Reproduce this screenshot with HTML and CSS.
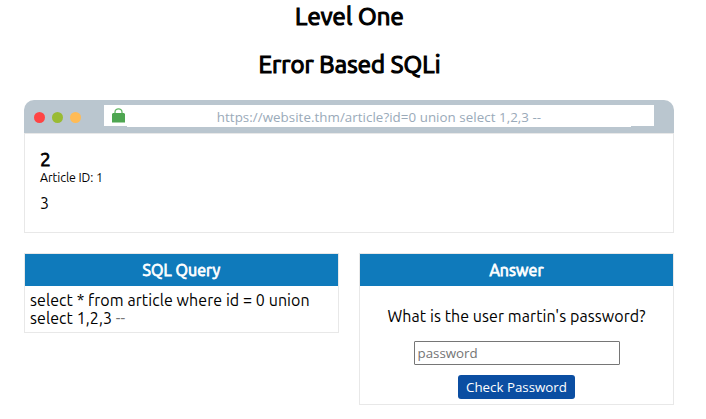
FILE: index.html
```html
<!DOCTYPE html>
<html lang="en">
<head>
<meta charset="utf-8">
<title>Level One</title>
<link rel="stylesheet" href="styles.css">
</head>
<body>
<h1 class="title">Level One</h1>
<h1 class="title second">Error Based SQLi</h1>
<main class="page">
  <section class="browser">
    <div class="bar">
      <i class="dot red"></i><i class="dot green"></i><i class="dot amber"></i>
      <div class="address">
        <svg class="lock" width="13" height="15" viewBox="0 0 13 15"><path d="M3 6V4.3a3.5 3.5 0 0 1 7 0V6" fill="none" stroke="#5fb562" stroke-width="1.3"/><path d="M1 5h11l1 1v8.5H0V6z" fill="#4ea651"/></svg>
        <span class="url">https://website.thm/article?id=0 union select 1,2,3 --</span>
      </div>
    </div>
    <article class="view">
      <h2 class="heading">2</h2>
      <p class="meta">Article ID: 1</p>
      <p class="content">3</p>
    </article>
  </section>
  <div class="columns">
    <section class="card">
      <h3 class="card-title">SQL Query</h3>
      <p class="query">select * from article where id = 0 union<br>select 1,2,3 <span class="comment">--</span></p>
    </section>
    <section class="card">
      <h3 class="card-title">Answer</h3>
      <form class="answer">
        <label class="question" for="pw">What is the user martin's password?</label>
        <input class="field" id="pw" placeholder="password">
        <button class="check" type="button">Check Password</button>
      </form>
    </section>
  </div>
</main>
</body>
</html>
```
FILE: styles.css
```css
* { box-sizing: border-box; }
body { margin: 0; background: #fff; color: #000; font: 16px/18px Ubuntu, "Noto Sans", sans-serif; letter-spacing: 0.07px; }
h1, h2, h3, p { margin: 0; }
h1, h2, h3 { font-weight: 400; -webkit-text-stroke: 0.8px currentColor; }
.title { width: 699px; text-align: center; font-size: 24px; line-height: 28px; padding-top: 3px; letter-spacing: 0.12px; -webkit-text-stroke-width: 1.2px; }
.second { padding-top: 20px; }
.page { width: 650px; margin: 21px 0 0 24px; }
.bar { display: flex; align-items: center; height: 33px; padding-left: 10px; gap: 7px; background: #bac6cf; border-radius: 10px 10px 0 0; }
.dot { width: 11px; height: 11px; margin-top: 2px; border-radius: 50%; }
.red { background: #ff4444; }
.green { background: #99bb33; }
.amber { background: #ffbb55; }
.address { display: flex; align-items: flex-start; align-self: flex-start; width: 550px; height: 21px; margin: 5px 0 0 16px; background: #fff; }
.lock { margin: 3px 2px 0 8px; }
.url { width: 504px; height: 22px; background: #fff; text-align: center; font: 13.33px/24px "Open Sans", sans-serif; color: #9aaab9; letter-spacing: 0.05px; }
.view { height: 100px; border: 1px solid #e8e8e8; padding: 15px 15px; }
.heading { margin-bottom: 1px; font-size: 19.2px; line-height: 20px; }
.meta { font-size: 12.4px; line-height: 15px; letter-spacing: -0.1px; }
.content { margin-top: 9px; }
.columns { display: grid; grid-template-columns: 315px 315px; gap: 20px; align-items: start; margin-top: 20px; }
.card { border: 1px solid #e8e8e8; }
.card-title { height: 32px; background: #0f7abb; color: #fff; font-size: 16px; line-height: 32px; text-align: center; }
.query { height: 46px; padding: 5px; white-space: nowrap; }
.comment { color: #777; }
.answer { display: flex; flex-direction: column; align-items: center; height: 118px; padding-top: 21px; }
.field { width: 206px; height: 24px; margin-top: 16px; padding: 1px 3px; border: 1px solid #767676; border-radius: 1px; font: 13.33px "Open Sans", sans-serif; }
.check { width: 117px; height: 24px; margin-top: 10px; padding: 0; border: 0; border-radius: 3px; background: #0b4ea2; color: #fff; font: 13.33px "Open Sans", sans-serif; }
```
